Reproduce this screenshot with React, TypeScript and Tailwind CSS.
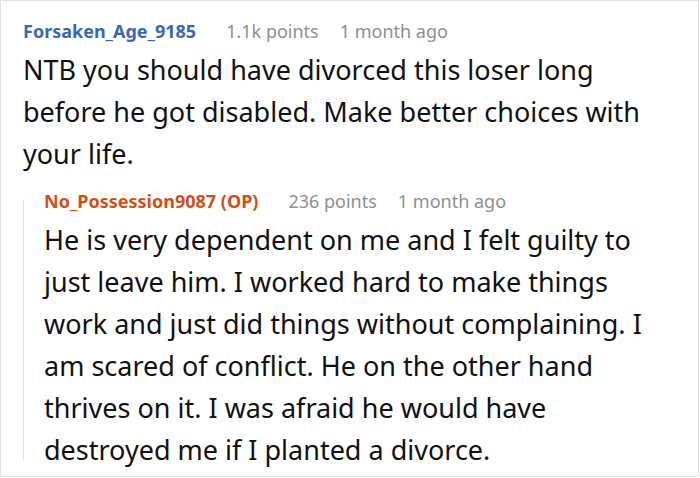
import React from "react";

type Comment = {
  author: string;
  op?: boolean;
  points: string;
  time: string;
  lines: string[];
};

const parent: Comment = {
  author: "Forsaken_Age_9185",
  points: "1.1k points",
  time: "1 month ago",
  lines: [
    "NTB you should have divorced this loser long",
    "before he got disabled. Make better choices with",
    "your life.",
  ],
};

const reply: Comment = {
  author: "No_Possession9087 (OP)",
  op: true,
  points: "236 points",
  time: "1 month ago",
  lines: [
    "He is very dependent on me and I felt guilty to",
    "just leave him. I worked hard to make things",
    "work and just did things without complaining. I",
    "am scared of conflict. He on the other hand",
    "thrives on it. I was afraid he would have",
    "destroyed me if I planted a divorce.",
  ],
};

function Header({ c }: { c: Comment }) {
  return (
    <div className="flex h-[24px] items-center whitespace-nowrap text-[18px] leading-[24px]">
      <span className={`font-bold ${c.op ? "text-[#d14f1a]" : "text-[#3a67b2]"}`}>{c.author}</span>
      <span className="ml-[30px] text-[#8f8f8f]">{c.points}</span>
      <span className="ml-[21px] text-[#8f8f8f]">{c.time}</span>
    </div>
  );
}

function Body({ lines }: { lines: string[] }) {
  return (
    <p className="mt-[6px] whitespace-nowrap text-[27px] leading-[42px] text-[#111]">
      {lines.map((l, i) => (
        <React.Fragment key={i}>
          {l}
          {i < lines.length - 1 && <br />}
        </React.Fragment>
      ))}
    </p>
  );
}

export default function App() {
  return (
    <div
      className="h-[478px] w-[700px] overflow-hidden bg-white"
      style={{ fontFamily: '"Noto Sans", "Open Sans", sans-serif' }}
    >
      <div className="h-[477px] w-[699px] border border-[#e2e2e2] pl-[22px] pt-[18px]">
        <Header c={parent} />
        <Body lines={parent.lines} />
        <div className="mt-[14px] flex">
          <div className="mb-[11px] mt-[11px] w-px shrink-0 bg-[#e2e2e2]" />
          <div className="pl-[20px]">
            <Header c={reply} />
            <Body lines={reply.lines} />
          </div>
        </div>
      </div>
    </div>
  );
}
